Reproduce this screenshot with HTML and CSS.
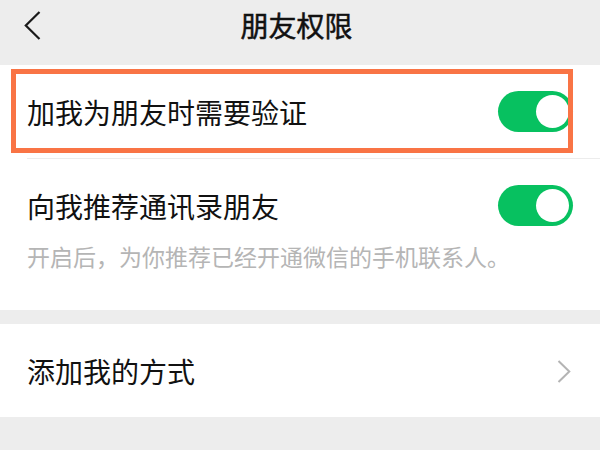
FILE: index.html
```html
<!DOCTYPE html>
<html lang="zh-CN">
<head>
<meta charset="utf-8">
<title>朋友权限</title>
<link rel="stylesheet" href="styles.css">
</head>
<body>
<div class="page">
  <header class="topbar">
    <div class="back">
      <svg width="20" height="32" viewBox="0 0 20 32"><path d="M16.5 3 L2.8 16.5 L16.5 30" fill="none" stroke="#1a1a1a" stroke-width="2.2"/></svg>
    </div>
    <div class="title">朋友权限</div>
    <div></div>
  </header>

  <section class="card card-first">
    <div class="row">
      <span class="label">加我为朋友时需要验证</span>
      <span class="switch"><span class="knob"></span></span>
    </div>
    <div class="divider"></div>
    <div class="row-tall">
      <div class="row-head">
        <span class="label">向我推荐通讯录朋友</span>
        <span class="switch"><span class="knob"></span></span>
      </div>
      <div class="hint">开启后，为你推荐已经开通微信的手机联系人。</div>
    </div>
    <div class="highlight"></div>
  </section>

  <section class="card card-second">
    <div class="row">
      <span class="label">添加我的方式</span>
      <svg class="arrow" width="16" height="24" viewBox="0 0 16 24"><path d="M2.5 2 L13.3 12.5 L2.5 23" fill="none" stroke="#b4b4b4" stroke-width="2"/></svg>
    </div>
  </section>
</div>
</body>
</html>
```

FILE: styles.css
```css
* { box-sizing: border-box; }

html, body {
  margin: 0;
  padding: 0;
  background: #ededed;
}

body {
  font-family: "Noto Sans CJK SC", "Noto Sans", sans-serif;
  color: #111;
}

.page {
  width: 600px;
  height: 450px;
  overflow: hidden;
}

.topbar {
  height: 65px;
  padding: 5px 30px 0 23px;
  display: grid;
  grid-template-columns: 1fr auto 1fr;
  align-items: start;
}

.back {
  height: 40px;
  display: flex;
  align-items: center;
}

.back svg { display: block; }

.title {
  font-size: 28px;
  line-height: 40px;
  font-weight: 400;
  color: #111;
  -webkit-text-stroke: 0.5px #111;
}

.card {
  background: #fff;
}

.card-first {
  position: relative;
  padding-bottom: 39px;
}

.row {
  height: 93px;
  padding: 0 27px 0 27px;
  display: flex;
  align-items: center;
  justify-content: space-between;
}

.label {
  font-size: 28px;
  line-height: 40px;
}

.divider {
  height: 1px;
  margin-left: 27px;
  background: #ececec;
}

.row-tall {
  padding: 26px 27px 0 27px;
}

.row-head {
  height: 41px;
  display: flex;
  align-items: center;
  justify-content: space-between;
}

.hint {
  margin-top: 15px;
  font-size: 23px;
  line-height: 30px;
  color: #b5b5b5;
}

.switch {
  width: 75px;
  height: 41px;
  border-radius: 21px;
  background: #07c160;
  padding: 4px;
  display: flex;
  justify-content: flex-end;
}

.knob {
  width: 33px;
  height: 33px;
  border-radius: 50%;
  background: #fff;
}

.highlight {
  position: absolute;
  left: 11px;
  top: 4px;
  width: 562px;
  height: 84px;
  border: 5px solid #f97445;
}

.card-second {
  margin-top: 14px;
}

.card-second .row {
  padding-right: 28px;
}

.arrow { display: block; }
```
